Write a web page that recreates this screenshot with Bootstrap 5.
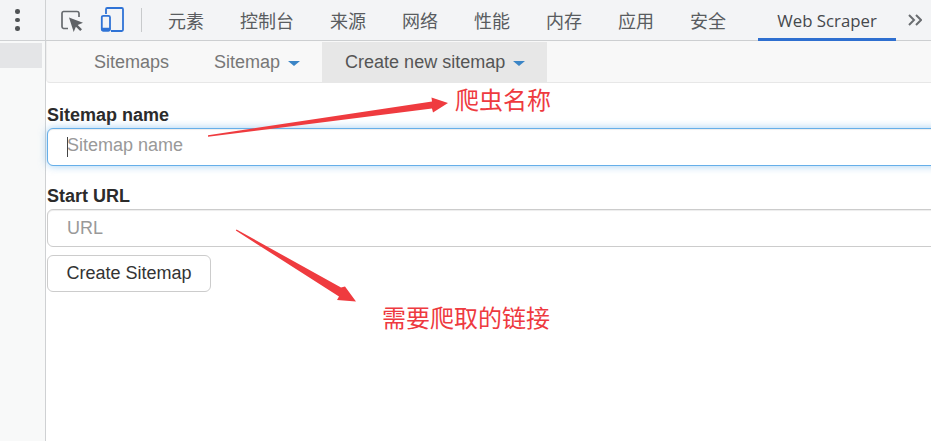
<!doctype html>
<html lang="zh">
<head>
<meta charset="utf-8">
<title>Web Scraper</title>
<link rel="stylesheet" href="https://cdn.jsdelivr.net/npm/bootstrap@5.3.0/dist/css/bootstrap.min.css">
<style>
html,body{height:441px;overflow:hidden;background:#fff;font-family:"Liberation Sans",Arial,sans-serif;}
.shell{height:441px;width:931px;overflow:hidden;position:relative;}
.side-pane{width:46px;flex:none;background:#f8f9f9;border-right:1px solid #cfd1d3;display:flex;flex-direction:column;}
.dots-cell{height:41px;border-bottom:1px solid #cfd1d3;display:flex;flex-direction:column;align-items:center;justify-content:center;gap:4px;padding-right:10px;background:#f3f4f6;}
.dots-cell i{display:block;width:4.5px;height:4.5px;border-radius:50%;background:#505356;}
.side-sel{height:25px;margin-top:2px;width:42px;background:#e4e5e7;}
.main-pane{flex:1 1 auto;min-width:0;}
.dev-tabs{height:41px;background:#f3f4f6;border-bottom:1px solid #cdcfd1;font-family:"Noto Sans CJK SC","Liberation Sans",sans-serif;font-size:18px;color:#595c60;padding-left:14px;white-space:nowrap;}
.dev-icon{flex:none;}
.tool-sep{width:1.5px;height:24px;background:#c8cacc;margin:0 26px 0 16.500px;flex:none;}
.dev-tab{margin-right:36px;width:36px;flex:none;line-height:41px;height:41px;}
.dev-tab-wide{width:54px;}
.dev-tab-active{width:138px;flex:none;height:41px;line-height:41px;text-align:center;font-family:"Open Sans","Liberation Sans",sans-serif;font-size:16.800px;color:#45484c;border-bottom:3px solid #2e6fd0;margin-left:-4px;}
.more-tab{flex:none;margin-left:12px;}
.scrape-nav{height:42px;background:#f8f8f8;border:1px solid #e7e7e7;border-top:0;border-left-color:#eeeeee;border-radius:0 0 0 4px;margin:0 -2px 0 0;padding:0 0 0 24px;font-size:18px;color:#777;}
.scrape-item{height:41px;line-height:42px;padding:0 23px;color:#777;flex:none;}
.scrape-item-first{padding-right:22px;}
.scrape-item-trim{padding-right:22px;}
.scrape-item-open{height:40px;background:#e7e7e7;color:#555;padding:0 22px 0 23px;margin:1px 0 0 0;line-height:40px;}
.caret-mark{display:inline-block;width:0;height:0;border-top:5px solid #3b85c6;border-left:6px solid transparent;border-right:6px solid transparent;margin-left:8px;vertical-align:middle;}
.form-area{padding:12px 0 0 1px;font-size:18px;color:#333;}
.field-label{font-weight:700;font-size:18px;line-height:24px;display:block;color:#2b2b2b;height:25px;margin-top:8px;margin-bottom:0;}
.field-label-second{margin-top:0;}
.field-wrap{margin-right:-12px;margin-bottom:18px;}
.field-wrap-last{margin-bottom:8px;}
.field-input.form-control{height:38px;border:1px solid #ccc;border-radius:6px;font-size:18px;padding:6px 19px;color:#555;box-shadow:inset 0 1px 1px rgba(0,0,0,.075);}
.field-input.form-control::placeholder{color:#999;}
.field-input.field-focus.form-control{border-color:#66afe9;padding:4px 19px 8px;box-shadow:inset 0 1px 1px rgba(0,0,0,.075),0 0 8px rgba(102,175,233,.6);}
.text-caret{position:absolute;left:20px;top:9px;width:1px;height:20px;background:#444;}
.save-btn.btn{height:37px;width:164px;border:1px solid #ccc;border-radius:6px;background:#fff;color:#333;font-size:18px;padding:0;}
.note-layer{position:absolute;left:0;top:0;pointer-events:none;}
.note-text{position:absolute;font-family:"Noto Sans CJK SC",sans-serif;font-size:24px;line-height:32px;color:#ee3a3f;white-space:nowrap;}
.note-one{left:455px;top:83px;}
.note-two{left:382px;top:301px;}
</style>
</head>
<body>
<div class="shell d-flex">
  <div class="side-pane">
    <div class="dots-cell"><i></i><i></i><i></i></div>
    <div class="side-sel"></div>
  </div>
  <div class="main-pane">
    <div class="dev-tabs d-flex align-items-center">
      <svg width="24" height="24" viewBox="0 0 24 24" class="dev-icon"><path d="M8 20.500H3.500a2 2 0 0 1-1.500-2V5.200A2 2 0 0 1 3.500 3.500H17a2 2 0 0 1 2 1.700V9" fill="none" stroke="#666a6e" stroke-width="1.700"/><path d="M9 9.500 23 14.800l-5.300 2.100 4.300 4.300-1.800 1.800-4.300-4.300-2.200 5.300z" fill="#5f6266"/></svg>
      <svg width="24" height="26" viewBox="0 0 24 26" class="ms-3 dev-icon"><path d="M6 7V2.200A1.200 1.200 0 0 1 7.200 1h14.600A1.200 1.200 0 0 1 23 2.200v20.600a1.200 1.200 0 0 1-1.200 1.200H11" fill="none" stroke="#2f73d6" stroke-width="1.800"/><rect x="1.800" y="8.800" width="8.200" height="15" rx="1.500" fill="none" stroke="#2f73d6" stroke-width="1.800"/><path d="M1.500 20.800h8.700v2a1.300 1.300 0 0 1-1.300 1.300H2.800a1.300 1.300 0 0 1-1.300-1.300z" fill="#2f73d6"/></svg>
      <div class="tool-sep"></div>
      <div class="dev-tab">元素</div>
      <div class="dev-tab dev-tab-wide">控制台</div>
      <div class="dev-tab">来源</div>
      <div class="dev-tab">网络</div>
      <div class="dev-tab">性能</div>
      <div class="dev-tab">内存</div>
      <div class="dev-tab">应用</div>
      <div class="dev-tab">安全</div>
      <div class="dev-tab-active">Web Scraper</div>
      <svg class="more-tab" width="14" height="12" viewBox="0 0 14 12"><path d="M1 1l5 5-5 5M8 1l5 5-5 5" fill="none" stroke="#6a6d71" stroke-width="2"/></svg>
    </div>
    <nav class="scrape-nav d-flex">
      <div class="scrape-item scrape-item-first">Sitemaps</div>
      <div class="scrape-item scrape-item-trim">Sitemap<span class="caret-mark"></span></div>
      <div class="scrape-item scrape-item-open">Create new sitemap<span class="caret-mark"></span></div>
    </nav>
    <form class="form-area">
      <label class="field-label" for="nm">Sitemap name</label>
      <div class="field-wrap position-relative">
        <input id="nm" class="form-control field-input field-focus" placeholder="Sitemap name">
        <span class="text-caret"></span>
      </div>
      <label class="field-label field-label-second" for="ur">Start URL</label>
      <div class="field-wrap field-wrap-last">
        <input id="ur" class="form-control field-input" placeholder="URL">
      </div>
      <button type="button" class="btn save-btn">Create Sitemap</button>
    </form>
  </div>
  <svg class="note-layer" width="931" height="441" viewBox="0 0 931 441">
    <path d="M208 135.200 432 101.500 431.500 97.500 448 103 433 112.500 432 108.500 208 136.800z" fill="#ef3b3f"/>
    <path d="M236.500 229.500 341 287.500 345 286.500 356 301.500 337 300 339 296.500 235.800 230.500z" fill="#ef3b3f"/>
  </svg>
  <div class="note-text note-one">爬虫名称</div>
  <div class="note-text note-two">需要爬取的链接</div>
</div>
<script src="https://cdn.jsdelivr.net/npm/bootstrap@5.3.0/dist/js/bootstrap.bundle.min.js"></script>
</body>
</html>
